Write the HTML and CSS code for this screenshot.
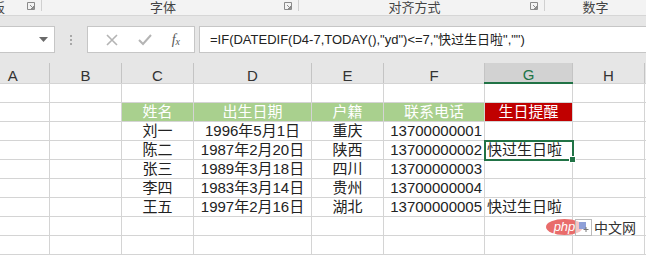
FILE: index.html
```html
<!DOCTYPE html>
<html lang="zh-CN">
<head>
    <meta charset="UTF-8">
    <title>生日提醒</title>
    <link rel="stylesheet" href="styles.css">
</head>
<body>
    <div class="ribbon">
        <div class="group g1"><span class="glabel cut">剪贴板</span><svg class="launch" width="8" height="8" viewBox="0 0 8 8"><path d="M0.5 7.5V0.5H7.5V7.5Z M3 3L6.5 6.5 M6.5 4V6.5H4" fill="none" stroke="#8a8a8a" stroke-width="1"/></svg></div>
        <i class="sep"></i>
        <div class="group g2"><span class="glabel">字体</span><svg class="launch" width="8" height="8" viewBox="0 0 8 8"><path d="M0.5 7.5V0.5H7.5V7.5Z M3 3L6.5 6.5 M6.5 4V6.5H4" fill="none" stroke="#8a8a8a" stroke-width="1"/></svg></div>
        <i class="sep"></i>
        <div class="group g3"><span class="glabel">对齐方式</span><svg class="launch" width="8" height="8" viewBox="0 0 8 8"><path d="M0.5 7.5V0.5H7.5V7.5Z M3 3L6.5 6.5 M6.5 4V6.5H4" fill="none" stroke="#8a8a8a" stroke-width="1"/></svg></div>
        <i class="sep"></i>
        <div class="group g4"><span class="glabel">数字</span></div>
    </div>

    <div class="fbar">
        <div class="namebox"><svg width="9" height="5" viewBox="0 0 9 5"><path d="M0 0H9L4.5 5Z" fill="#6a6a6a"/></svg></div>
        <div class="dots"><i></i><i></i><i></i></div>
        <div class="fxbox">
            <svg width="12" height="12" viewBox="0 0 12 12"><path d="M1 1L11 11M11 1L1 11" stroke="#b4b4b4" stroke-width="1.6"/></svg>
            <svg width="14" height="12" viewBox="0 0 14 12"><path d="M1 6L5 10L13 1" fill="none" stroke="#b4b4b4" stroke-width="2"/></svg>
            <span class="fx">f<sub>x</sub></span>
        </div>
        <div class="formula">=IF(DATEDIF(D4-7,TODAY(),"yd")&lt;=7,"快过生日啦","")</div>
    </div>

    <table class="sheet">
        <colgroup>
            <col style="width:73px"><col style="width:72px"><col style="width:72px"><col style="width:118px">
            <col style="width:72px"><col style="width:101px"><col style="width:88px"><col style="width:72px"><col style="width:72px">
        </colgroup>
        <tr class="colhead">
            <th>A</th><th>B</th><th>C</th><th>D</th><th>E</th><th>F</th><th class="cur">G</th><th>H</th><th></th>
        </tr>
        <tr><td></td><td></td><td></td><td></td><td></td><td></td><td></td><td></td><td></td></tr>
        <tr class="head">
            <td></td><td></td><td class="green">姓名</td><td class="green">出生日期</td><td class="green">户籍</td><td class="green">联系电话</td><td class="red">生日提醒</td><td></td><td></td>
        </tr>
        <tr><td></td><td></td><td class="c">刘一</td><td class="c">1996年5月1日</td><td class="c">重庆</td><td class="r">13700000001</td><td></td><td></td><td></td></tr>
        <tr><td></td><td></td><td class="c">陈二</td><td class="c">1987年2月20日</td><td class="c">陕西</td><td class="r">13700000002</td><td class="sel">快过生日啦</td><td></td><td></td></tr>
        <tr><td></td><td></td><td class="c">张三</td><td class="c">1989年3月18日</td><td class="c">四川</td><td class="r">13700000003</td><td></td><td></td><td></td></tr>
        <tr><td></td><td></td><td class="c">李四</td><td class="c">1983年3月14日</td><td class="c">贵州</td><td class="r">13700000004</td><td></td><td></td><td></td></tr>
        <tr><td></td><td></td><td class="c">王五</td><td class="c">1997年2月16日</td><td class="c">湖北</td><td class="r">13700000005</td><td>快过生日啦</td><td></td><td></td></tr>
        <tr><td></td><td></td><td></td><td></td><td></td><td></td><td></td><td></td><td></td></tr>
        <tr><td></td><td></td><td></td><td></td><td></td><td></td><td></td><td></td><td></td></tr>
    </table>

    <div class="mark">
        <span class="php">php</span>
        <span class="markbox"><svg width="12" height="12" viewBox="0 0 12 12"><rect x="1" y="1" width="7" height="7" fill="#8fa0d8"/><path d="M8 6V11M5.5 8.5H10.5" stroke="#777" stroke-width="1"/></svg></span>
        <span class="marktext">中文网</span>
    </div>
</body>
</html>
```

FILE: styles.css
```css
body { margin: 0; width: 646px; height: 258px; overflow: hidden; position: relative; background: #fff; color: #222; font-family: "Liberation Sans", "Noto Sans CJK SC", sans-serif; }

.ribbon { display: flex; align-items: flex-start; height: 15px; overflow: hidden; background: #f3f3f3; border-bottom: 1px solid #d6d6d6; }
.group { display: flex; align-items: flex-start; height: 15px; }
.sep { width: 1px; height: 11px; background: #d0d0d0; flex: none; }
.g1 { width: 41px; }
.g2 { width: 256px; }
.g3 { width: 245px; }
.g4 { flex: 1; }
.glabel { flex: 1; text-align: center; font-size: 13px; line-height: 13px; color: #444; font-family: "Noto Sans CJK SC", sans-serif; white-space: nowrap; }
.glabel.cut { flex: none; margin-left: -34px; }
.g1 .launch { margin-left: auto; }
.launch { margin: 2px 6px 0 0; flex: none; }

.fbar { display: flex; align-items: center; height: 47px; background: #e6e6e6; }
.namebox { width: 55px; height: 27px; box-sizing: border-box; background: #fff; border: 1px solid #c6c6c6; border-left: none; display: flex; align-items: center; justify-content: flex-end; padding-right: 6px; }
.dots { display: flex; flex-direction: column; gap: 2px; width: 32px; align-items: center; }
.dots i { width: 2px; height: 2px; background: #a8a8a8; }
.fxbox { width: 108px; height: 27px; box-sizing: border-box; background: #fff; border: 1px solid #c6c6c6; display: flex; align-items: center; justify-content: space-around; padding: 0 4px 0 8px; }
.fx { font-family: "Liberation Serif", serif; font-style: italic; font-size: 14px; color: #555; }
.fx sub { font-size: 10px; vertical-align: -1px; }
.formula { flex: 1; margin-left: 4px; height: 27px; box-sizing: border-box; background: #fff; border: 1px solid #c6c6c6; border-right: none; padding-left: 10px; font-size: 13px; line-height: 25px; white-space: nowrap; overflow: hidden; color: #222; }

.sheet { width: 740px; border-collapse: collapse; table-layout: fixed; margin-left: -24px; font-size: 15px; }
.sheet td { height: 18px; padding: 0 2px; border: 1px solid #d4d4d4; white-space: nowrap; overflow: visible; line-height: 18px; }
.sheet tr.colhead th { height: 19px; padding: 0; background: #e6e6e6; font-weight: normal; font-size: 15px; line-height: 15px; vertical-align: bottom; color: #333; border: none; border-right: 1px solid #c4c4c4; border-bottom: 1px solid #d4d4d4; }
.sheet tr.colhead th.cur { background: #d2d2d2; color: #217346; border-bottom: 2px solid #217346; }
.sheet tr:nth-child(2) td { border-top: none; }

.c { text-align: center; }
.r { text-align: right; }
.green { background: #a9d08e; color: #fff; text-align: center; }
.red { background: #c00000; color: #fff; text-align: center; }
.sel { position: relative; outline: 2px solid #217346; outline-offset: -1px; }
.sel::after { content: ""; position: absolute; right: -4px; bottom: -4px; width: 5px; height: 5px; background: #217346; border: 1px solid #fff; }

.mark { position: absolute; left: 546px; top: 217px; display: flex; align-items: center; }
.php { width: 37px; height: 16px; border-radius: 50%; background: #e96c6b; color: #fff; font-size: 13px; font-style: italic; line-height: 15px; text-align: center; }
.markbox { width: 17px; height: 17px; margin-left: -8px; box-sizing: border-box; border: 1px solid #bbb; background: rgba(255,255,255,0.6); display: flex; align-items: center; justify-content: center; }
.marktext { font-family: "Noto Sans CJK SC", sans-serif; font-size: 14px; color: #333; margin-left: 2px; }
```
